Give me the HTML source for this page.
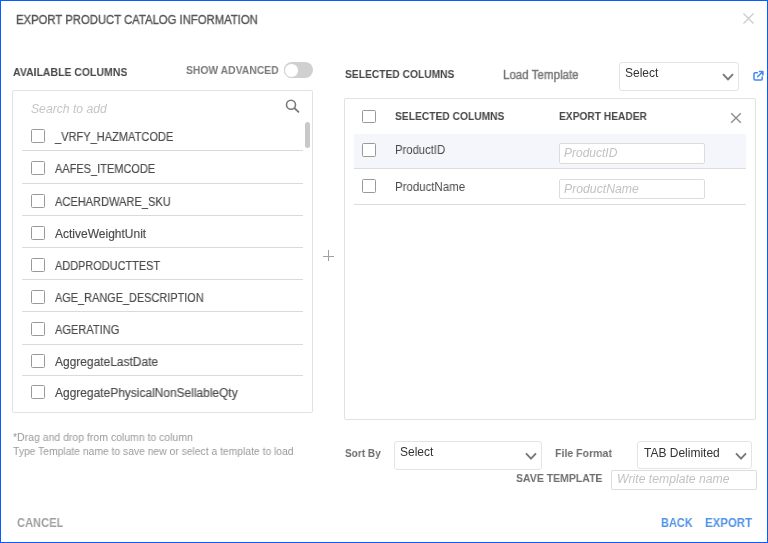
<!DOCTYPE html>
<html><head><meta charset="utf-8">
<style>
*{box-sizing:border-box;margin:0;padding:0}
html,body{width:768px;height:543px;overflow:hidden;background:#fff}
body{font-family:"Liberation Sans",sans-serif;position:relative}
.a{position:absolute}
.t{position:absolute;white-space:nowrap;transform-origin:0 0;will-change:transform}
.cb{position:absolute;width:14px;height:14px;border:1px solid #999;border-radius:1.5px;background:#fff}
.sel{position:absolute;border:1px solid #e4e4e4;border-radius:3px;background:#fff}
.inp{position:absolute;border:1px solid #dcdcdc;border-radius:2px;background:#fff}
</style></head>
<body>
<div class="a" style="left:0;top:0;width:768px;height:543px;border:1px solid #0b5cff"></div>
<div class="t" style="left:15.5px;top:13.84px;font-size:12px;line-height:12px;font-weight:normal;font-style:normal;color:#555;transform:scaleX(0.942);-webkit-text-stroke:0.35px #555;">EXPORT PRODUCT CATALOG INFORMATION</div>
<svg class="a" style="left:742px;top:12px" width="13" height="13" viewBox="0 0 13 13"><path d="M1.5 1.5L11.5 11.5M11.5 1.5L1.5 11.5" stroke="#cccccc" stroke-width="1.3"/></svg>
<div class="t" style="left:13px;top:67.19px;font-size:11px;line-height:11px;font-weight:bold;font-style:normal;color:#474747;transform:scaleX(0.953);">AVAILABLE COLUMNS</div>
<div class="t" style="left:186px;top:64.69px;font-size:11px;line-height:11px;font-weight:bold;font-style:normal;color:#7a7a7a;transform:scaleX(0.941);">SHOW ADVANCED</div>
<div class="a" style="left:284px;top:62px;width:29px;height:16px;border-radius:8px;background:#d0d0d0"></div>
<div class="a" style="left:284.3px;top:62.8px;width:14.8px;height:14.8px;border-radius:50%;background:#fff;border:1px solid #cdcdcd"></div>
<div class="a" style="left:12px;top:90px;width:301px;height:323px;border:1px solid #e2e2e2;border-radius:2px"></div>
<div class="t" style="left:31.3px;top:102.84px;font-size:12px;line-height:12px;font-weight:normal;font-style:italic;color:#c6c6c6;transform:scaleX(1.015);">Search to add</div>
<svg class="a" style="left:284px;top:97px" width="18" height="18" viewBox="0 0 18 18"><circle cx="7" cy="7.7" r="4.5" fill="none" stroke="#7a7a7a" stroke-width="1.6"/><path d="M10.3 11L15 15.3" stroke="#7a7a7a" stroke-width="1.8"/></svg>
<div class="a" style="left:305px;top:122px;width:5px;height:26px;border-radius:2.5px;background:#c9c9c9"></div>
<div class="a" style="left:22px;top:150px;width:281px;height:1px;background:#dadada"></div>
<div class="a" style="left:22px;top:183px;width:281px;height:1px;background:#dadada"></div>
<div class="a" style="left:22px;top:215px;width:281px;height:1px;background:#dadada"></div>
<div class="a" style="left:22px;top:247px;width:281px;height:1px;background:#dadada"></div>
<div class="a" style="left:22px;top:279px;width:281px;height:1px;background:#dadada"></div>
<div class="a" style="left:22px;top:311px;width:281px;height:1px;background:#dadada"></div>
<div class="a" style="left:22px;top:344px;width:281px;height:1px;background:#dadada"></div>
<div class="a" style="left:22px;top:375px;width:281px;height:1px;background:#dadada"></div>
<div class="cb" style="left:31px;top:129px"></div>
<div class="t" style="left:55px;top:131.14px;font-size:12px;line-height:12px;font-weight:normal;font-style:normal;color:#4a4a4a;transform:scaleX(0.921);-webkit-text-stroke:0.15px #4a4a4a;">_VRFY_HAZMATCODE</div>
<div class="cb" style="left:31px;top:161px"></div>
<div class="t" style="left:55px;top:163.14px;font-size:12px;line-height:12px;font-weight:normal;font-style:normal;color:#4a4a4a;transform:scaleX(0.916);-webkit-text-stroke:0.15px #4a4a4a;">AAFES_ITEMCODE</div>
<div class="cb" style="left:31px;top:194px"></div>
<div class="t" style="left:55px;top:196.14px;font-size:12px;line-height:12px;font-weight:normal;font-style:normal;color:#4a4a4a;transform:scaleX(0.921);-webkit-text-stroke:0.15px #4a4a4a;">ACEHARDWARE_SKU</div>
<div class="cb" style="left:31px;top:226px"></div>
<div class="t" style="left:55px;top:228.14px;font-size:12px;line-height:12px;font-weight:normal;font-style:normal;color:#4a4a4a;transform:scaleX(0.999);-webkit-text-stroke:0.15px #4a4a4a;">ActiveWeightUnit</div>
<div class="cb" style="left:31px;top:258px"></div>
<div class="t" style="left:55px;top:260.14px;font-size:12px;line-height:12px;font-weight:normal;font-style:normal;color:#4a4a4a;transform:scaleX(0.911);-webkit-text-stroke:0.15px #4a4a4a;">ADDPRODUCTTEST</div>
<div class="cb" style="left:31px;top:290px"></div>
<div class="t" style="left:55px;top:292.14px;font-size:12px;line-height:12px;font-weight:normal;font-style:normal;color:#4a4a4a;transform:scaleX(0.910);-webkit-text-stroke:0.15px #4a4a4a;">AGE_RANGE_DESCRIPTION</div>
<div class="cb" style="left:31px;top:322px"></div>
<div class="t" style="left:55px;top:324.14px;font-size:12px;line-height:12px;font-weight:normal;font-style:normal;color:#4a4a4a;transform:scaleX(0.922);-webkit-text-stroke:0.15px #4a4a4a;">AGERATING</div>
<div class="cb" style="left:31px;top:354px"></div>
<div class="t" style="left:55px;top:356.14px;font-size:12px;line-height:12px;font-weight:normal;font-style:normal;color:#4a4a4a;transform:scaleX(0.996);-webkit-text-stroke:0.15px #4a4a4a;">AggregateLastDate</div>
<div class="cb" style="left:31px;top:385px"></div>
<div class="t" style="left:55px;top:387.14px;font-size:12px;line-height:12px;font-weight:normal;font-style:normal;color:#4a4a4a;transform:scaleX(0.996);-webkit-text-stroke:0.15px #4a4a4a;">AggregatePhysicalNonSellableQty</div>
<div class="a" style="left:322.7px;top:255.6px;width:11.6px;height:1.3px;background:#a0a0a0"></div>
<div class="a" style="left:327.7px;top:250px;width:1.6px;height:11px;background:#a0a0a0"></div>
<div class="t" style="left:345px;top:68.69px;font-size:11px;line-height:11px;font-weight:bold;font-style:normal;color:#474747;transform:scaleX(0.932);">SELECTED COLUMNS</div>
<div class="t" style="left:503px;top:68.64px;font-size:12px;line-height:12px;font-weight:normal;font-style:normal;color:#777;transform:scaleX(0.963);-webkit-text-stroke:0.4px #777;">Load Template</div>
<div class="sel" style="left:619px;top:62px;width:120px;height:29px"></div>
<div class="t" style="left:624.5px;top:66.84px;font-size:12px;line-height:12px;font-weight:normal;font-style:normal;color:#333;transform:scaleX(0.990);">Select</div>
<svg class="a" style="left:721px;top:71.7px" width="14" height="10" viewBox="0 0 14 10"><path d="M2 2.2L7 7.4L12 2.2" fill="none" stroke="#777" stroke-width="1.9"/></svg>
<svg class="a" style="left:752px;top:70px" width="12" height="12" viewBox="0 0 12 12"><path d="M5.3 2.8H3A1 1 0 0 0 2 3.8V9.1A1 1 0 0 0 3 10.1H9.2A1 1 0 0 0 10.2 9.1V7" fill="none" stroke="#4189f0" stroke-width="1.5" stroke-linecap="round"/><path d="M7.4 1.6H10.9V5.1M10.7 1.8L5.6 6.8" fill="none" stroke="#4189f0" stroke-width="1.5" stroke-linecap="round" stroke-linejoin="round"/></svg>
<div class="a" style="left:344px;top:98px;width:412px;height:322px;border:1px solid #e2e2e2;border-radius:2px"></div>
<div class="cb" style="left:362px;top:110px;height:13px"></div>
<div class="t" style="left:395px;top:110.99px;font-size:11px;line-height:11px;font-weight:bold;font-style:normal;color:#474747;transform:scaleX(0.932);">SELECTED COLUMNS</div>
<div class="t" style="left:559px;top:110.99px;font-size:11px;line-height:11px;font-weight:bold;font-style:normal;color:#474747;transform:scaleX(0.928);">EXPORT HEADER</div>
<svg class="a" style="left:729px;top:111px" width="14" height="14" viewBox="0 0 14 14"><path d="M2.2 2.2L11.8 11.8M11.8 2.2L2.2 11.8" stroke="#8e8e8e" stroke-width="1.4"/></svg>
<div class="a" style="left:354px;top:134px;width:392px;height:34px;background:#f5f6fb"></div>
<div class="a" style="left:354px;top:168px;width:392px;height:1px;background:#dcdcdc"></div>
<div class="a" style="left:354px;top:204px;width:392px;height:1px;background:#dcdcdc"></div>
<div class="cb" style="left:362px;top:142.5px"></div>
<div class="t" style="left:395.2px;top:143.84px;font-size:12px;line-height:12px;font-weight:normal;font-style:normal;color:#4a4a4a;transform:scaleX(0.940);">ProductID</div>
<div class="inp" style="left:559px;top:142.5px;width:146px;height:21px"></div>
<div class="t" style="left:564.4px;top:146.64px;font-size:12px;line-height:12px;font-weight:normal;font-style:italic;color:#c2c2c2;transform:scaleX(0.998);">ProductID</div>
<div class="cb" style="left:362px;top:179px"></div>
<div class="t" style="left:395.2px;top:180.64px;font-size:12px;line-height:12px;font-weight:normal;font-style:normal;color:#4a4a4a;transform:scaleX(0.955);">ProductName</div>
<div class="inp" style="left:559px;top:179px;width:146px;height:20px"></div>
<div class="t" style="left:564.3px;top:182.84px;font-size:12px;line-height:12px;font-weight:normal;font-style:italic;color:#c2c2c2;transform:scaleX(1.020);">ProductName</div>
<div class="t" style="left:13px;top:432.23px;font-size:10.6px;line-height:10.6px;font-weight:normal;font-style:normal;color:#9a9a9a;transform:scaleX(0.989);">*Drag and drop from column to column</div>
<div class="t" style="left:13px;top:446.23px;font-size:10.6px;line-height:10.6px;font-weight:normal;font-style:normal;color:#9a9a9a;transform:scaleX(0.975);">Type Template name to save new or select a template to load</div>
<div class="t" style="left:344.8px;top:447.81px;font-size:11.8px;line-height:11.8px;font-weight:bold;font-style:normal;color:#6e6e6e;transform:scaleX(0.851);">Sort By</div>
<div class="sel" style="left:394px;top:441px;width:148px;height:28.5px"></div>
<div class="t" style="left:399.6px;top:446.44px;font-size:12px;line-height:12px;font-weight:normal;font-style:normal;color:#333;transform:scaleX(0.990);">Select</div>
<svg class="a" style="left:523.5px;top:450.6px" width="14" height="10" viewBox="0 0 14 10"><path d="M2 2.4L7 7.6L12 2.4" fill="none" stroke="#777" stroke-width="1.9"/></svg>
<div class="t" style="left:555.2px;top:448.21px;font-size:11.8px;line-height:11.8px;font-weight:bold;font-style:normal;color:#6e6e6e;transform:scaleX(0.896);">File Format</div>
<div class="sel" style="left:637px;top:441px;width:115px;height:28px"></div>
<div class="t" style="left:644px;top:446.54px;font-size:12px;line-height:12px;font-weight:normal;font-style:normal;color:#333;transform:scaleX(1.000);">TAB Delimited</div>
<svg class="a" style="left:734px;top:450.6px" width="14" height="10" viewBox="0 0 14 10"><path d="M2 2.4L7 7.6L12 2.4" fill="none" stroke="#777" stroke-width="1.9"/></svg>
<div class="t" style="left:515.7px;top:473.01px;font-size:11.8px;line-height:11.8px;font-weight:bold;font-style:normal;color:#6e6e6e;transform:scaleX(0.889);">SAVE TEMPLATE</div>
<div class="inp" style="left:611px;top:470px;width:146px;height:20px"></div>
<div class="t" style="left:617.3px;top:473.14px;font-size:12px;line-height:12px;font-weight:normal;font-style:italic;color:#c2c2c2;transform:scaleX(1.016);">Write template name</div>
<div class="t" style="left:17px;top:516.84px;font-size:12px;line-height:12px;font-weight:bold;font-style:normal;color:#a0a0a0;transform:scaleX(0.926);">CANCEL</div>
<div class="t" style="left:660.8px;top:516.84px;font-size:12px;line-height:12px;font-weight:bold;font-style:normal;color:#5294e8;transform:scaleX(0.915);">BACK</div>
<div class="t" style="left:705px;top:516.84px;font-size:12px;line-height:12px;font-weight:bold;font-style:normal;color:#5294e8;transform:scaleX(0.955);">EXPORT</div>
</body></html>
